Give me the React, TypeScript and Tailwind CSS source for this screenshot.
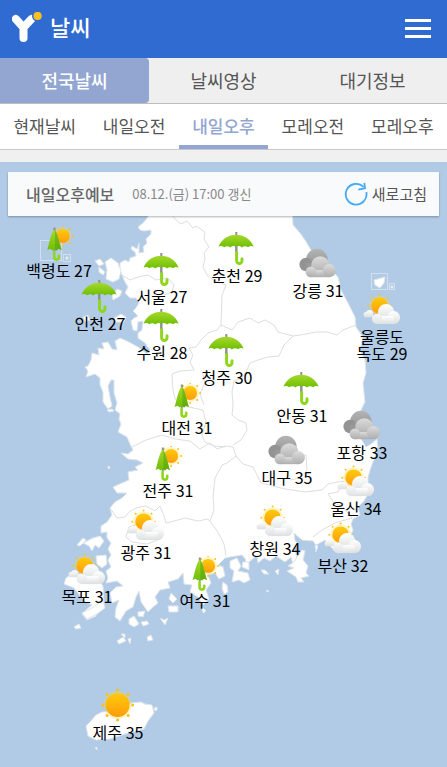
import React, { Fragment } from "react";

type Weather = "rain" | "rainSun" | "cloudy" | "partly" | "sunny";

interface City {
  name: string[];
  temp: number;
  icon: Weather;
  x: number;
  y: number;
}

const MAP_W = 447;
const MAP_H = 605;

// x is the centre of the pin, y its top edge, both in map units
const cities: City[] = [
  { name: ["백령도"], temp: 27, icon: "rainSun", x: 59, y: 64 },
  { name: ["서울"], temp: 27, icon: "rain", x: 162, y: 90 },
  { name: ["춘천"], temp: 29, icon: "rain", x: 237, y: 69 },
  { name: ["강릉"], temp: 31, icon: "cloudy", x: 318, y: 84 },
  { name: ["인천"], temp: 27, icon: "rain", x: 100, y: 117 },
  { name: ["수원"], temp: 28, icon: "rain", x: 162, y: 146 },
  { name: ["울릉도", "독도"], temp: 29, icon: "partly", x: 382, y: 130 },
  { name: ["청주"], temp: 30, icon: "rain", x: 227, y: 171 },
  { name: ["안동"], temp: 31, icon: "rain", x: 302, y: 209 },
  { name: ["대전"], temp: 31, icon: "rainSun", x: 187, y: 221 },
  { name: ["포항"], temp: 33, icon: "cloudy", x: 362, y: 246 },
  { name: ["대구"], temp: 35, icon: "cloudy", x: 287, y: 271 },
  { name: ["전주"], temp: 31, icon: "rainSun", x: 168, y: 284 },
  { name: ["울산"], temp: 34, icon: "partly", x: 356, y: 302 },
  { name: ["창원"], temp: 34, icon: "partly", x: 275, y: 342 },
  { name: ["광주"], temp: 31, icon: "partly", x: 146, y: 346 },
  { name: ["부산"], temp: 32, icon: "partly", x: 343, y: 359 },
  { name: ["목포"], temp: 31, icon: "partly", x: 87, y: 390 },
  { name: ["여수"], temp: 31, icon: "rainSun", x: 205, y: 394 },
  { name: ["제주"], temp: 35, icon: "sunny", x: 118, y: 526 },
];

const sections = ["전국날씨", "날씨영상", "대기정보"];
const periods = ["현재날씨", "내일오전", "내일오후", "모레오전", "모레오후"];

function Sun({ cx, cy, r }: { cx: number; cy: number; r: number }) {
  const d = r + 3;
  const dots = [0, 45, 90, 135, 180, 225, 270, 315].map((a) => {
    const t = (a * Math.PI) / 180;
    return [cx + d * Math.cos(t), cy + d * Math.sin(t)];
  });
  return (
    <g>
      <circle cx={cx} cy={cy} r={r + 2} fill="#ffd83a" opacity="0.3" />
      {dots.map(([x, y], i) => (
        <circle key={i} cx={x} cy={y} r={r > 10 ? 1.5 : 1} fill="#f5c51c" />
      ))}
      <circle cx={cx} cy={cy} r={r} fill="url(#sunFill)" />
    </g>
  );
}

function WeatherIcon({ kind }: { kind: Weather }) {
  return (
    <svg viewBox="0 0 40 36" className="block h-9 w-10" aria-hidden="true">
      {kind === "rain" && (
        <g>
          <path d="M19.700 1v20" stroke="#8f8f8f" strokeWidth="2" />
          <path d="M2 15.600C5 8 12 3.800 19.500 3.800S34 8 37 15.600c-2-1-4-.8-5.400.6-2-1.400-4.500-1.400-6.300.2-1.800-1.600-4-1.700-5.700-.6-1.700-1.100-4-1-5.800.6-1.800-1.600-4.200-1.600-6.200-.2C6 14.800 4 14.600 2 15.600z" fill="url(#leaf)" />
          <path d="M19.700 15v6" stroke="#8f8f8f" strokeWidth="2" />
          <path d="M20 21.500v8.200a2.700 2.700 0 0 0 5.400 0v-2" fill="none" stroke="#8fd61c" strokeWidth="3" strokeLinecap="round" />
        </g>
      )}
      {kind === "rainSun" && (
        <g>
          <Sun cx={23.5} cy={10} r={7} />
          <path d="M15.200 1.500v24" stroke="#8f8f8f" strokeWidth="2" />
          <path d="M15.200 3.500c-4 4-5 14-7.200 20.500l3-1.200 2 1.700 2.300-1.500 2.200 1.500 1.700-1.700 3.300 1.200C20 17.500 19.400 7.500 15.200 3.500z" fill="url(#leaf)" />
          <path d="M15.800 4.200c3 4 4 13.500 6.700 19.800l-3.300-1.200-1.700 1.700-1.700-1.100z" fill="#4f9a0c" opacity="0.45" />
          <path d="M15 26v5.300a2.300 2.300 0 0 0 4.600 0v-1.500" fill="none" stroke="#8fd61c" strokeWidth="2.600" strokeLinecap="round" />
        </g>
      )}
      {kind === "sunny" && <Sun cx={20} cy={17} r={12} />}
      {kind === "partly" && (
        <g>
          <Sun cx={18} cy={13.7} r={8.3} />
          <path d="M4.500 25.300a2.600 2.600 0 0 1 0-5.200 4 4 0 0 1 7 0v5.200z" fill="url(#whiteCloud)" />
          <g fill="url(#whiteCloud)">
            <circle cx="24.500" cy="20.300" r="8.200" />
            <circle cx="32" cy="25.600" r="6.500" />
            <rect x="15" y="24" width="17" height="8.100" />
          </g>
          <circle cx="15.500" cy="26.900" r="5.200" fill="url(#whiteBall)" />
        </g>
      )}
      {kind === "cloudy" && (
        <g>
          <circle cx="19.300" cy="13.500" r="10.700" fill="url(#darkCloud)" />
          <circle cx="8.500" cy="18.500" r="6.700" fill="#939393" />
          <rect x="8" y="17" width="15" height="8" fill="#999999" />
          <g fill="url(#grayCloud)">
            <circle cx="22.700" cy="19.200" r="9" />
            <rect x="13" y="24" width="19" height="7.200" />
            <circle cx="31.700" cy="24.600" r="6.600" />
            <circle cx="13.300" cy="25.900" r="5.300" />
          </g>
        </g>
      )}
    </svg>
  );
}

function IconFills() {
  return (
    <defs>
      <linearGradient id="sunFill" x1="0" y1="0" x2="0" y2="1">
        <stop offset="0" stopColor="#ffcb0a" />
        <stop offset="1" stopColor="#ff9c0c" />
      </linearGradient>
      <linearGradient id="leaf" x1="0" y1="0" x2="0" y2="1">
        <stop offset="0" stopColor="#a5d92c" />
        <stop offset="1" stopColor="#6fbe04" />
      </linearGradient>
      <linearGradient id="whiteCloud" x1="0" y1="0" x2="0" y2="1">
        <stop offset="0" stopColor="#ffffff" />
        <stop offset="1" stopColor="#dcdedf" />
      </linearGradient>
      <linearGradient id="whiteBall" x1="0" y1="0" x2="0" y2="1">
        <stop offset="0" stopColor="#f8f9f9" />
        <stop offset="1" stopColor="#dfe1e2" />
      </linearGradient>
      <linearGradient id="darkCloud" x1="0" y1="0" x2="0" y2="1">
        <stop offset="0" stopColor="#b4b4b4" />
        <stop offset="1" stopColor="#8e8e8e" />
      </linearGradient>
      <linearGradient id="grayCloud" x1="0" y1="0" x2="0" y2="1">
        <stop offset="0" stopColor="#dcdcdc" />
        <stop offset="1" stopColor="#adadad" />
      </linearGradient>
    </defs>
  );
}

const mainland =
  "M150 205 148 217 143 223 138 227 140 230 144 231 151 230 151 234 146 239 147 243 143 247 144 252 139 253 139 243 137 249 132 246 131 249 135 252 136 256 130 258 129 262 125 260 120 263 120 269 122 275 125 282 128 287 125 293 130 298 136 298 139 303 136 308 133 311 138 316 134 318 131 321 133 330 137 331 138 322 143 321 142 330 138 333 138 338 145 343 150 350 147 354 138 347 127 341 120 338 115 341 117 350 112 349 108 342 102 343 104 349 98 348 99 355 92 353 91 360 88 366 85 367 88 371 86 377 95 374 100 378 100 385 103 392 103 402 108 409 112 406 110 397 108 386 111 380 114 380 114 393 117 403 115 410 120 414 119 419 121 424 118 432 127 437 130 444 133 450 128 454 121 453 128 459 137 460 143 463 135 467 138 470 128 472 129 480 122 483 113 487 117 493 127 493 122 498 115 502 110 508 112 515 107 522 101 526 101 533 107 532 107 538 111 543 108 549 111 555 108 560 111 567 106 571 108 578 106 583 117 581 123 586 116 587 110 593 112 603 119 600 116 608 115 617 120 621 126 611 133 607 136 597 139 591 141 602 148 612 153 607 158 603 155 597 160 590 170 588 168 582 178 579 183 573 184 584 192 585 190 592 198 597 203 605 209 599 206 590 211 583 208 575 215 573 219 579 225 576 223 567 218 565 225 558 230 557 242 555 246 560 243 566 249 562 257 555 258 563 264 558 270 561 276 556 285 562 291 557 293 564 297 557 294 549 299 544 295 541 294 533 302 540 313 541 316 545 325 540 330 546 336 552 346 546 353 530 351 524 353 519 360 515 358 507 364 501 368 494 368 477 371 467 375 457 378 447 377 439 371 444 366 447 361 439 360 424 361 410 365 402 363 383 366 373 365 360 360 350 363 337 356 327 355 317 348 303 341 290 338 277 328 268 318 258 311 250 305 240 300 233 293 225 292 205Z";

const islands = [
  "M105 262 111 258 118 263 121 271 119 279 113 282 106 279 107 270Z",
  "M95 261 100 259 104 264 99 266Z",
  "M99 267 105 272 103 275 99 272Z",
  "M117 289 122 291 120 296 113 300 112 296Z",
  "M114 318 121 314 126 317 124 322 115 322Z",
  "M83 317 88 315 90 320 85 322Z",
  "M107 410 112 409 114 411 109 412Z",
  "M108 466 110 467 109 469 108 468Z",
  "M77 545 83 538 86 540 80 546Z",
  "M83 543 93 538 100 536 104 541 99 548 95 545 92 551 89 546Z",
  "M66 578 72 574 84 574 96 576 103 586 104 602 96 608 96 616 87 620 82 614 87 609 92 605 84 601 74 588 64 584Z",
  "M96 556 106 555 107 564 102 568 97 564Z",
  "M82 613 92 608 103 600 105 608 97 614 87 619Z",
  "M74 627 79 624 81 628 76 629Z",
  "M129 619 134 616 139 624 134 627 129 624Z",
  "M138 612 145 611 143 617 138 616Z",
  "M141 622 147 621 149 624 143 626Z",
  "M117 641 123 637 126 641 119 644Z",
  "M121 634 125 634 125 638Z",
  "M128 639 131 638 130 644Z",
  "M147 637 151 635 153 640 148 641Z",
  "M160 618 164 620 168 618 165 625Z",
  "M168 606 178 606 178 612 169 612Z",
  "M171 593 177 599 173 603 169 599Z",
  "M202 607 206 611 203 613Z",
  "M223 582 227 585 228 592 224 594 222 588Z",
  "M230 561 237 558 241 566 238 571 248 573 250 580 244 583 239 580 232 582 234 571 230 568Z",
  "M243 562 249 562 249 570 242 567Z",
  "M261 570 265 570 269 574 264 574Z",
  "M275 571 279 569 278 575Z",
  "M266 590 269 591 267 592Z",
  "M288 566 294 562 302 550 305 551 303 560 308 566 306 573 309 576 301 578 304 582 298 582 296 577 287 571 294 568Z",
  "M315 545 318 546 316 552Z",
  "M86 726 90 722 96 715 102 712 118 711 131 703 141 702 145 704 152 705 154 713 148 721 144 729 128 733 110 739 96 740 88 736Z",
  "M154 708 157 707 157 710 155 711Z",
  "M95 748 97 747 97 750Z",
  "M374 280 385 277 384 283 380 288 375 285Z",
  "M391 286 393 286 393 288 391 288Z",
  "M66 257 68 257 68 259 66 259Z",
];

const borders = [
  "M164 205 175 219 181 224 187 221 193 228 196 226 205 232 204 239 209 247 204 253 205 259 203 267 207 275 213 280 226 285 222 295 221 325 217 330 208 333 201 340 196 347 189 348 193 355 190 362 194 370 180 371 172 374 173 390 175 399 184 406 203 410 206 422 202 435 205 442 214 446 225 447",
  "M221 325 232 330 238 322 250 318 258 323 265 320 274 325 278 332 293 336 300 335 316 332 327 332 337 335 343 330 356 325",
  "M293 336 284 345 279 356 268 357 258 360 250 363 246 372 242 378 234 381 232 392 233 405 232 415 238 420 246 423 247 430 241 440 233 445",
  "M202 372 205 382 200 394 204 405M132 447 146 440 162 435 175 439 190 441 200 449 210 443 217 449 225 446 233 447 236 456 227 463 222 465 215 478 213 497 214 510 210 521",
  "M236 456 243 464 253 467 258 477 261 483 285 489 305 492 322 490 328 484 343 481 350 487 360 481",
  "M110 508 117 518 125 517 129 512 136 508 146 506 155 511 160 506 164 516 166 523 178 520 185 518 198 521 208 519 218 532 224 544 226 556",
  "M129 527 126 537 132 542 147 544 160 539 160 530 150 525 138 524Z",
  "M122 275 130 280 138 277 148 275 156 280 168 278 174 285 172 292 164 295",
  "M292 455 306 455 307 470 300 478 290 480",
  "M343 481 338 492 328 494 334 503 343 507 352 518 335 523 322 530 313 537",
];

function KoreaMap() {
  return (
    <svg viewBox="0 162 447 605" className="absolute inset-0 h-full w-full" role="img" aria-label="전국 날씨 지도">
      <IconFills />
      <g fill="#ffffff" stroke="#dfe5ea" strokeWidth="1" strokeLinejoin="round">
        <path d={mainland} />
        {islands.map((d) => (
          <path key={d} d={d} />
        ))}
      </g>
      <g fill="none" stroke="#dedede" strokeWidth="1" strokeLinejoin="round">
        {borders.map((d) => (
          <path key={d} d={d} />
        ))}
      </g>
      <g fill="none" stroke="#d3dfe9" strokeWidth="1">
        <rect x="40.500" y="240.500" width="21" height="20" />
        <rect x="63.500" y="254.500" width="7" height="7" />
        <rect x="371.500" y="273.500" width="16" height="16" />
        <rect x="389.500" y="283.500" width="5" height="6" />
      </g>
    </svg>
  );
}

function CityPin({ city }: { city: City }) {
  return (
    <li
      className="absolute flex -translate-x-1/2 flex-col items-center"
      style={{ left: `${(city.x / MAP_W) * 100}%`, top: `${(city.y / MAP_H) * 100}%` }}
    >
      <WeatherIcon kind={city.icon} />
      <span className="text-center text-base leading-[17px] whitespace-nowrap text-black">
        {city.name.map((line, i) => (
          <Fragment key={line}>
            {i > 0 && <br />}
            {line}
          </Fragment>
        ))}{" "}
        {city.temp}
      </span>
    </li>
  );
}

export default function App() {
  return (
    <div className="bg-[#f0f0f0] font-['Noto_Sans_CJK_KR',sans-serif]">
      <header className="flex h-[58px] items-center bg-[#306bd1] px-3 pb-1">
        <a href="#home" aria-label="홈" className="block">
          <svg viewBox="0 0 30 30" className="block h-[30px] w-[30px]" aria-hidden="true">
            <path d="M3.800 7 11.500 15.500 19.500 7M11.500 15.500V26" fill="none" stroke="#fff" strokeWidth="8" strokeLinecap="round" strokeLinejoin="round" />
            <circle cx="25.600" cy="4" r="5.600" fill="#306bd1" />
            <circle cx="25.600" cy="4" r="4.100" fill="#ffc01e" />
          </svg>
        </a>
        <h1 className="ml-2 pb-0.5 text-[22px] leading-8 font-medium text-white">날씨</h1>
        <button type="button" aria-label="메뉴" className="mr-1 ml-auto flex flex-col gap-[5px] pt-0.5">
          <span className="block h-[3px] w-[26px] bg-white" />
          <span className="block h-[3px] w-[26px] bg-white" />
          <span className="block h-[3px] w-[26px] bg-white" />
        </button>
      </header>

      <nav className="grid h-[46px] grid-cols-3 border-b border-[#bdbdbd] bg-[#efefef]">
        {sections.map((label, i) => (
          <a
            key={label}
            href={`#section-${i}`}
            className={
              i === 0
                ? "flex items-center justify-center rounded-r bg-[#92a6d1] pb-0.5 text-lg font-medium text-white"
                : "flex items-center justify-center pb-0.5 text-lg text-[#555]"
            }
          >
            {label}
          </a>
        ))}
      </nav>

      <nav className="grid h-[46px] grid-cols-5 border-b border-[#c8c8c8] bg-white">
        {periods.map((label, i) => (
          <a
            key={label}
            href={`#period-${i}`}
            className={
              i === 2
                ? "flex items-center justify-center border-y-4 border-t-transparent border-b-[#92a6d1] pb-0.5 text-[17px] font-medium text-[#92a6d1]"
                : "flex items-center justify-center pb-0.5 text-[17px] text-[#555]"
            }
          >
            {label}
          </a>
        ))}
      </nav>

      <main className="mt-3 overflow-hidden bg-[#b1cbe6]">
        <div className="relative aspect-[447/605] w-full">
          <KoreaMap />
          <div className="relative px-2 pt-[10px]">
            <div className="flex h-11 items-center bg-[#f9fafc] pr-3 pl-[18px] shadow-[0_1px_2px_rgba(0,0,0,0.3)]">
              <h2 className="text-base font-medium text-[#666]">내일오후예보</h2>
              <p className="ml-[18px] text-[13px] text-[#888]">08.12.(금) 17:00 갱신</p>
              <button type="button" className="ml-auto flex items-center gap-1 text-[15px] text-[#555]">
                <svg viewBox="0 0 24 24" className="h-6 w-6" fill="none" stroke="#46aaf5" strokeWidth="1.800" aria-hidden="true">
                  <path d="M22.300 10A10.400 10.400 0 1 1 19.500 4.900" />
                  <path d="M14.300 7.600 21 6.200 20.300.8" />
                </svg>
                새로고침
              </button>
            </div>
          </div>
          <ul>
            {cities.map((city) => (
              <CityPin key={city.name[0]} city={city} />
            ))}
          </ul>
        </div>
      </main>
    </div>
  );
}
